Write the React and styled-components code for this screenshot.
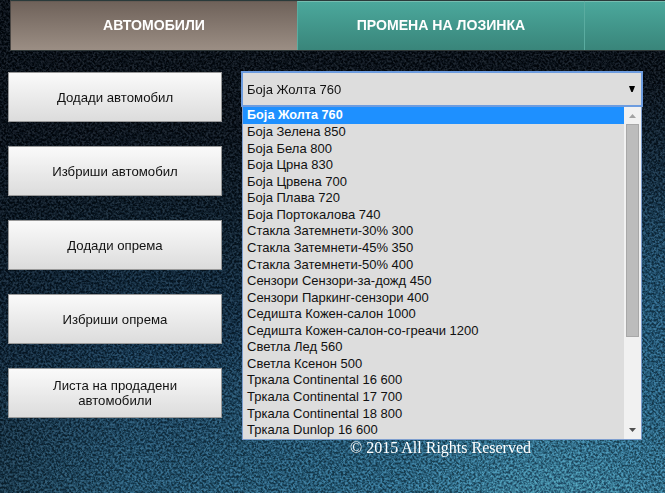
import React from "react";
import styled, { createGlobalStyle } from "styled-components";

const GlobalStyle = createGlobalStyle`
  * { box-sizing: border-box; }
  body {
    margin: 0;
    overflow: hidden;
    background: #03080e;
    font-family: "Liberation Sans", Arial, sans-serif;
  }
`;

const Page = styled.div`
  position: relative;
  height: 493px;
  overflow: hidden;
  isolation: isolate;
  background:
    radial-gradient(ellipse 400px 360px at 560px 540px, rgba(58, 130, 156, 0.95), rgba(36, 98, 128, 0.6) 45%, rgba(10, 45, 75, 0) 100%),
    radial-gradient(ellipse 200px 240px at 700px 310px, rgba(26, 76, 110, 0.8), rgba(10, 40, 70, 0) 100%),
    linear-gradient(90deg, rgba(0, 5, 12, 0.4), rgba(0, 5, 12, 0) 130px),
    linear-gradient(#02070d 0, #030a12 130px, #061623 230px, #0c2940 340px, #163e57 430px, #1b4a64 493px);
`;

const Grain = styled.svg`
  position: absolute;
  inset: 0;
  z-index: -1;
  width: 100%;
  height: 100%;
  mix-blend-mode: ${(p) => p.$blend};
  opacity: ${(p) => p.$opacity};
`;

const Nav = styled.nav`
  display: flex;
  width: 861px;
  height: 51px;
  margin-left: 10px;
  border-top: 1px solid #2a3a3a;
  border-bottom: 1px solid #303838;
  border-left: 1px solid #4b4744;
`;

const Tab = styled.a`
  flex: none;
  display: flex;
  align-items: center;
  justify-content: center;
  width: ${(p) => p.$width}px;
  height: 49px;
  padding-bottom: 2px;
  color: #fff;
  font-size: 14.08px;
  font-weight: bold;
  border-top: 1px solid ${(p) => (p.$active ? "#665b54" : "#75bdb0")};
  border-left: ${(p) => (p.$active ? "none" : "1px solid #5aaca0")};
  background: ${(p) =>
    p.$active ? "linear-gradient(#6f625a, #9b8e84)" : "linear-gradient(#4ba89c, #39857a)"};
`;

const Main = styled.main`
  display: flex;
  gap: 19px;
  height: 368px;
  margin: 20px 0 0 8px;
`;

const Sidebar = styled.div`
  display: flex;
  flex-direction: column;
  gap: 24px;
  width: 214px;
  padding-top: 1px;
`;

const ActionButton = styled.button`
  flex: none;
  height: 50px;
  padding: 0 30px;
  border: 1px solid #999;
  background: linear-gradient(#fafafa, #dcdcdc);
  color: #111;
  font: 13.2px/15px "Liberation Sans", Arial, sans-serif;
`;

const Picker = styled.div`
  width: 402px;
  font-size: 13px;
  color: #111;
`;

const SelectBox = styled.div`
  display: flex;
  align-items: center;
  justify-content: space-between;
  height: 36px;
  padding: 0 6px 0 4px;
  border: 2px solid #6d9cdf;
  background: #ddd;
`;

const Caret = styled.svg`
  width: 6px;
  height: 6px;
`;

const Dropdown = styled.div`
  position: relative;
  z-index: 1;
  display: flex;
  width: 400px;
  height: 333px;
  margin-left: 1px;
  border: 1px solid #7f9fcf;
  border-top: none;
  background: #ddd;
`;

const OptionList = styled.div`
  flex: 1;
`;

const Option = styled.div`
  height: ${(p) => (p.$selected ? 17 : 16.57)}px;
  padding-left: 4px;
  line-height: ${(p) => (p.$selected ? 16 : 15.8)}px;
  white-space: nowrap;
  color: ${(p) => (p.$selected ? "#fff" : "#111")};
  font-weight: ${(p) => (p.$selected ? "bold" : "normal")};
  font-size: ${(p) => (p.$selected ? "12.7px" : "13px")};
  background: ${(p) => (p.$selected ? "#1e90ff" : "transparent")};
`;

const Scrollbar = styled.div`
  display: flex;
  flex-direction: column;
  align-items: center;
  width: 17px;
  background: #f1f1f1;
`;

const Arrow = styled.svg`
  width: 17px;
  height: 17px;
`;

const Thumb = styled.div`
  width: 13px;
  height: 213px;
  margin-bottom: auto;
  border: 1px solid #a8a8a8;
  background: #bcbcbc;
`;

const Footer = styled.footer`
  width: 665px;
  padding-left: 350px;
  color: #fff;
  font: 16px/18px "Liberation Serif", "Times New Roman", serif;
`;

const actions = [
  "Додади автомобил",
  "Избриши автомобил",
  "Додади опрема",
  "Избриши опрема",
  "Листа на продадени автомобили",
];

const options = [
  "Боја Жолта 760",
  "Боја Зелена 850",
  "Боја Бела 800",
  "Боја Црна 830",
  "Боја Црвена 700",
  "Боја Плава 720",
  "Боја Портокалова 740",
  "Стакла Затемнети-30% 300",
  "Стакла Затемнети-45% 350",
  "Стакла Затемнети-50% 400",
  "Сензори Сензори-за-дожд 450",
  "Сензори Паркинг-сензори 400",
  "Седишта Кожен-салон 1000",
  "Седишта Кожен-салон-со-греачи 1200",
  "Светла Лед 560",
  "Светла Ксенон 500",
  "Тркала Continental 16 600",
  "Тркала Continental 17 700",
  "Тркала Continental 18 800",
  "Тркала Dunlop 16 600",
];

export default function App() {
  return (
    <Page>
      <GlobalStyle />
      <Grain aria-hidden="true" $blend="overlay" $opacity={0.36}>
        <filter id="grain" x="0" y="0" width="100%" height="100%" colorInterpolationFilters="sRGB">
          <feTurbulence type="fractalNoise" baseFrequency="0.46" numOctaves="2" seed="7" />
          <feColorMatrix values="2.4 0 0 0 -0.7  2.4 0 0 0 -0.7  2.4 0 0 0 -0.7  0 0 0 0 1" />
        </filter>
        <rect width="100%" height="100%" filter="url(#grain)" />
      </Grain>
      <Grain aria-hidden="true" $blend="screen" $opacity={0.11}>
        <filter id="sparkle" x="0" y="0" width="100%" height="100%" colorInterpolationFilters="sRGB">
          <feTurbulence type="fractalNoise" baseFrequency="0.46" numOctaves="2" seed="7" />
          <feColorMatrix values="3 0 0 0 -1.2  3 0 0 0 -1.15  3 0 0 0 -1.1  0 0 0 0 1" />
        </filter>
        <rect width="100%" height="100%" filter="url(#sparkle)" />
      </Grain>
      <Nav>
        <Tab $width={286} $active>АВТОМОБИЛИ</Tab>
        <Tab $width={287}>ПРОМЕНА НА ЛОЗИНКА</Tab>
        <Tab $width={287} />
      </Nav>
      <Main>
        <Sidebar>
          {actions.map((label) => (
            <ActionButton key={label}>{label}</ActionButton>
          ))}
        </Sidebar>
        <Picker>
          <SelectBox>
            <span>{options[0]}</span>
            <Caret viewBox="0 0 6 6"><path d="M0 0H6L3.7 6H2.3Z" fill="#000" /></Caret>
          </SelectBox>
          <Dropdown>
            <OptionList>
              {options.map((label, i) => (
                <Option key={label} $selected={i === 0}>{label}</Option>
              ))}
            </OptionList>
            <Scrollbar>
              <Arrow viewBox="0 0 17 17"><path d="M5 11L8.5 7L12 11Z" fill="#a3a3a3" /></Arrow>
              <Thumb />
              <Arrow viewBox="0 0 17 17"><path d="M5 6L8.5 10L12 6Z" fill="#505050" /></Arrow>
            </Scrollbar>
          </Dropdown>
        </Picker>
      </Main>
      <Footer>© 2015 All Rights Reserved</Footer>
    </Page>
  );
}
